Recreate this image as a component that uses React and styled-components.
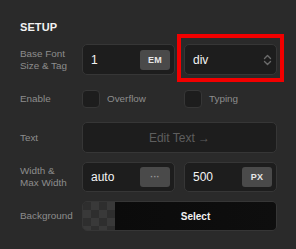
import React from "react";
import styled, { createGlobalStyle } from "styled-components";

const GlobalStyle = createGlobalStyle`
  html, body { margin: 0; padding: 0; background: #2a2a2a; }
  body { font-family: "Liberation Sans", Arial, sans-serif; -webkit-font-smoothing: antialiased; }
`;

const Panel = styled.div`
  width: 296px;
  height: 249px;
  box-sizing: border-box;
  padding: 21px 19px 0 20px;
  background: #2a2a2a;
  overflow: hidden;
`;

const Title = styled.h2`
  margin: 0 0 10px;
  font-size: 11px;
  line-height: 13px;
  font-weight: 700;
  color: #f2f2f2;
  letter-spacing: 0.1px;
`;

const Rows = styled.div`
  display: flex;
  flex-direction: column;
  gap: 9px;
`;

const Row = styled.div`
  display: grid;
  grid-template-columns: 62px 1fr;
  align-items: center;
  height: ${(p) => p.$h || 30}px;
`;

const Label = styled.div`
  font-size: 9.9px;
  line-height: 12px;
  color: #8d8d8d;
`;

const Pair = styled.div`
  display: grid;
  grid-template-columns: 1fr 1fr;
  gap: 9px;
  height: 100%;
  align-items: center;
`;

const Field = styled.div`
  position: relative;
  box-sizing: border-box;
  height: 100%;
  display: flex;
  align-items: center;
  justify-content: space-between;
  padding: 0 4px 0 8px;
  background: #1d1d1d;
  border: 1px solid #363636;
  border-radius: 5px;
`;

const Value = styled.span`
  font-size: 12px;
  color: #f4f4f4;
`;

const UnitButton = styled.button`
  width: 30px;
  height: 20px;
  padding: 0;
  border: none;
  border-radius: 3px;
  background: #4a4a4a;
  color: ${(p) => (p.$muted ? "#9a9a9a" : "#e6e6e6")};
  font-family: inherit;
  font-size: 9px;
  font-weight: 700;
  letter-spacing: 0.2px;
  display: flex;
  align-items: center;
  justify-content: center;
`;

const Highlight = styled.div`
  position: absolute;
  left: -8px;
  right: -8px;
  top: -11px;
  bottom: -8px;
  border: 4px solid #f20000;
  pointer-events: none;
`;

const CheckItem = styled.label`
  display: flex;
  align-items: center;
  gap: 7px;
  font-size: 9.9px;
  color: #8d8d8d;
`;

const CheckBox = styled.span`
  box-sizing: border-box;
  width: 18px;
  height: 18px;
  border-radius: 4px;
  background: #1d1d1d;
  border: 1px solid #363636;
`;

const WideButton = styled.button`
  box-sizing: border-box;
  width: 100%;
  height: 100%;
  background: #1d1d1d;
  border: 1px solid #363636;
  border-radius: 5px;
  color: #5e5e5e;
  font-family: inherit;
  font-size: 12px;
  padding: 0;
`;

const BgField = styled.div`
  box-sizing: border-box;
  height: 100%;
  display: flex;
  border: 1px solid #363636;
  border-radius: 5px;
  overflow: hidden;
`;

const Checker = styled.div`
  width: 32px;
  background-color: #2e2e2e;
  background-image: conic-gradient(
    #393939 25%,
    transparent 0 50%,
    #393939 0 75%,
    transparent 0
  );
  background-size: 16px 16px;
`;

const Swatch = styled.div`
  flex: 1;
  display: flex;
  align-items: center;
  justify-content: center;
  background: linear-gradient(90deg, #0b0b0b, #0e0e0e);
  color: #f2f2f2;
  font-size: 10px;
  font-weight: 600;
`;

const Chevrons = () => (
  <svg width="9" height="14" viewBox="0 0 9 14" fill="none">
    <path d="M1.5 5.5 L4.5 2.5 L7.5 5.5" stroke="#6b6b6b" strokeWidth="1.4" strokeLinecap="round" strokeLinejoin="round" />
    <path d="M1.5 8.5 L4.5 11.5 L7.5 8.5" stroke="#6b6b6b" strokeWidth="1.4" strokeLinecap="round" strokeLinejoin="round" />
  </svg>
);

export default function App() {
  return (
    <>
      <GlobalStyle />
      <Panel>
        <Title>SETUP</Title>
        <Rows>
          <Row $h={31}>
            <Label>
              Base Font
              <br />
              Size &amp; Tag
            </Label>
            <Pair>
              <Field>
                <Value>1</Value>
                <UnitButton>EM</UnitButton>
              </Field>
              <Field>
                <Value>div</Value>
                <Chevrons />
                <Highlight />
              </Field>
            </Pair>
          </Row>
          <Row $h={29}>
            <Label>Enable</Label>
            <Pair>
              <CheckItem>
                <CheckBox />
                Overflow
              </CheckItem>
              <CheckItem>
                <CheckBox />
                Typing
              </CheckItem>
            </Pair>
          </Row>
          <Row $h={31}>
            <Label>Text</Label>
            <WideButton>Edit Text →</WideButton>
          </Row>
          <Row $h={30}>
            <Label>
              Width &amp;
              <br />
              Max Width
            </Label>
            <Pair>
              <Field>
                <Value>auto</Value>
                <UnitButton $muted>···</UnitButton>
              </Field>
              <Field>
                <Value>500</Value>
                <UnitButton>PX</UnitButton>
              </Field>
            </Pair>
          </Row>
          <Row $h={30}>
            <Label>Background</Label>
            <BgField>
              <Checker />
              <Swatch>Select</Swatch>
            </BgField>
          </Row>
        </Rows>
      </Panel>
    </>
  );
}
